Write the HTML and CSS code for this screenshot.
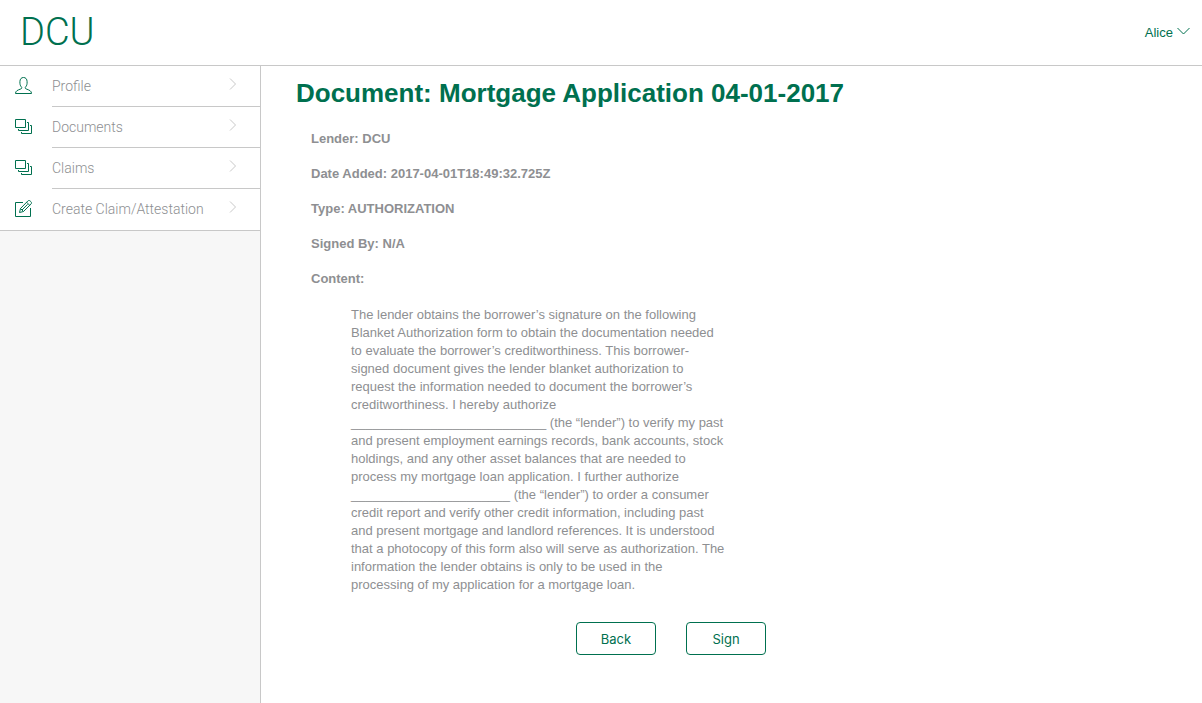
FILE: index.html
```html
<!DOCTYPE html>
<html lang="en">
<head>
<meta charset="utf-8">
<meta name="viewport" content="width=device-width, initial-scale=1">
<title>DCU – Document</title>
<link rel="stylesheet" href="styles.css">
</head>
<body>
<svg class="sprite" aria-hidden="true">
  <symbol id="icon-stack" viewBox="0 0 17 17">
    <path d="M.5 1.500h10v8H.5zM12 4.500h1.500v8H3.500V11M15 7.500h1.500v8H6.500V14"/>
  </symbol>
  <symbol id="icon-next" viewBox="0 0 8 12">
    <path d="M1 .5 6.500 6 1 11.500"/>
  </symbol>
</svg>
<header class="header">
  <a class="brand" href="#">DCU</a>
  <button class="user" type="button">Alice
    <svg class="user-arrow" viewBox="0 0 13 8" aria-hidden="true"><path d="M.5 1 6.500 7l6-6"/></svg>
  </button>
</header>
<div class="layout">
  <aside class="sidebar">
    <nav class="menu">
      <a class="item" href="#">
        <svg class="icon" viewBox="0 0 17 17" aria-hidden="true"><path d="M.5 16.500c0-2.600 2-3.300 5.400-4.600 1.200-.5 1.100-1.300.4-2C5.200 8.600 4.800 7 4.900 4.700 5 2 6.300.5 8.500.5s3.500 1.500 3.600 4.200c.1 2.300-.3 3.900-1.400 5.200-.7.700-.8 1.500.4 2 3.400 1.300 5.400 2 5.400 4.600z"/></svg>
        <span class="label">Profile<svg class="next" aria-hidden="true"><use href="#icon-next"/></svg></span>
      </a>
      <a class="item" href="#">
        <svg class="icon" aria-hidden="true"><use href="#icon-stack"/></svg>
        <span class="label">Documents<svg class="next" aria-hidden="true"><use href="#icon-next"/></svg></span>
      </a>
      <a class="item" href="#">
        <svg class="icon" aria-hidden="true"><use href="#icon-stack"/></svg>
        <span class="label">Claims<svg class="next" aria-hidden="true"><use href="#icon-next"/></svg></span>
      </a>
      <a class="item" href="#">
        <svg class="icon" viewBox="0 0 17 17" aria-hidden="true"><path d="M8 2.500H.5v14h15V8M4.500 12.500l1-4L12.800 1c.8-.7 1.600-.7 2.400 0l.7.700c.8.800.8 1.600 0 2.400L8.500 11.500zM5.500 8.500l3 3M11.600 2.200l3.100 3.100M7 10l5.600-5.700"/></svg>
        <span class="label">Create Claim/Attestation<svg class="next" aria-hidden="true"><use href="#icon-next"/></svg></span>
      </a>
    </nav>
  </aside>
  <main class="main">
    <h1 class="title">Document: Mortgage Application 04-01-2017</h1>
    <section class="document">
      <p class="field">Lender: DCU</p>
      <p class="field">Date Added: 2017-04-01T18:49:32.725Z</p>
      <p class="field">Type: AUTHORIZATION</p>
      <p class="field">Signed By: N/A</p>
      <p class="field">Content:</p>
      <blockquote class="content">The lender obtains the borrower’s signature on the following Blanket Authorization form to obtain the documentation needed to evaluate the borrower’s creditworthiness. This borrower-signed document gives the lender blanket authorization to request the information needed to document the borrower’s creditworthiness. I hereby authorize ___________________________ (the “lender”) to verify my past and present employment earnings records, bank accounts, stock holdings, and any other asset balances that are needed to process my mortgage loan application. I further authorize ______________________ (the “lender”) to order a consumer credit report and verify other credit information, including past and present mortgage and landlord references. It is understood that a photocopy of this form also will serve as authorization. The information the lender obtains is only to be used in the processing of my application for a mortgage loan.</blockquote>
      <div class="actions">
        <button class="button" type="button">Back</button>
        <button class="button" type="button">Sign</button>
      </div>
    </section>
  </main>
</div>
</body>
</html>
```
FILE: styles.css
```css
* { box-sizing: border-box; }

body {
  margin: 0;
  min-height: 100vh;
  display: flex;
  flex-direction: column;
  background: #fff;
  color: #8e8f92;
  font: 13px/18px "Liberation Sans", Arial, sans-serif;
}

svg {
  fill: none;
  stroke: #00704f;
}

.sprite {
  position: absolute;
  width: 0;
  height: 0;
}

.header {
  display: flex;
  align-items: center;
  justify-content: space-between;
  height: 66px;
  padding: 0 12px 2px 20px;
  border-bottom: 1px solid #c8c8c8;
}

.brand {
  color: #00704f;
  font: 300 38px/44px Roboto, sans-serif;
  text-decoration: none;
}

.user {
  display: flex;
  align-items: center;
  gap: 4px;
  padding: 2px 0 0;
  border: 0;
  background: none;
  color: #00704f;
  font: inherit;
}

.user-arrow {
  width: 13px;
  height: 8px;
  margin-bottom: 3px;
}

.layout {
  display: flex;
  flex: 1;
}

.sidebar {
  flex: 0 0 261px;
  border-right: 1px solid #c8c8c8;
  background: #f7f7f7;
}

.menu {
  border-bottom: 1px solid #c8c8c8;
  background: #fff;
}

.item {
  display: flex;
  align-items: center;
  gap: 20px;
  padding-left: 15px;
  color: #8e8f92;
  font: 300 14px/20px Roboto, sans-serif;
  text-decoration: none;
}

.icon {
  width: 17px;
  height: 17px;
  margin-bottom: 2px;
}

.label {
  flex: 1;
  display: flex;
  align-items: center;
  justify-content: space-between;
  height: 41px;
  padding-right: 23px;
  border-bottom: 1px solid #c8c8c8;
}

.item:last-child .label { border-bottom-color: transparent; }

.next {
  width: 8px;
  height: 12px;
  margin-bottom: 4px;
  stroke: #c8c8c8;
}

.main {
  flex: 1;
  padding: 11px 35px 40px;
}

.title {
  margin: 0;
  color: #00704f;
  font-size: 26px;
  line-height: 32px;
}

.document {
  display: flex;
  flex-direction: column;
  gap: 17px;
  max-width: 470px;
  padding: 21px 0 0 15px;
}

.field {
  margin: 0;
  font-weight: bold;
}

.content { margin: 1px 40px 0; }

.actions {
  display: flex;
  justify-content: flex-end;
  gap: 30px;
  padding-top: 11px;
}

.button {
  width: 80px;
  height: 33px;
  padding: 0;
  border: 1px solid #00704f;
  border-radius: 4px;
  background: #fff;
  color: #00704f;
  font: 13px/18px Inter, sans-serif;
}
```
